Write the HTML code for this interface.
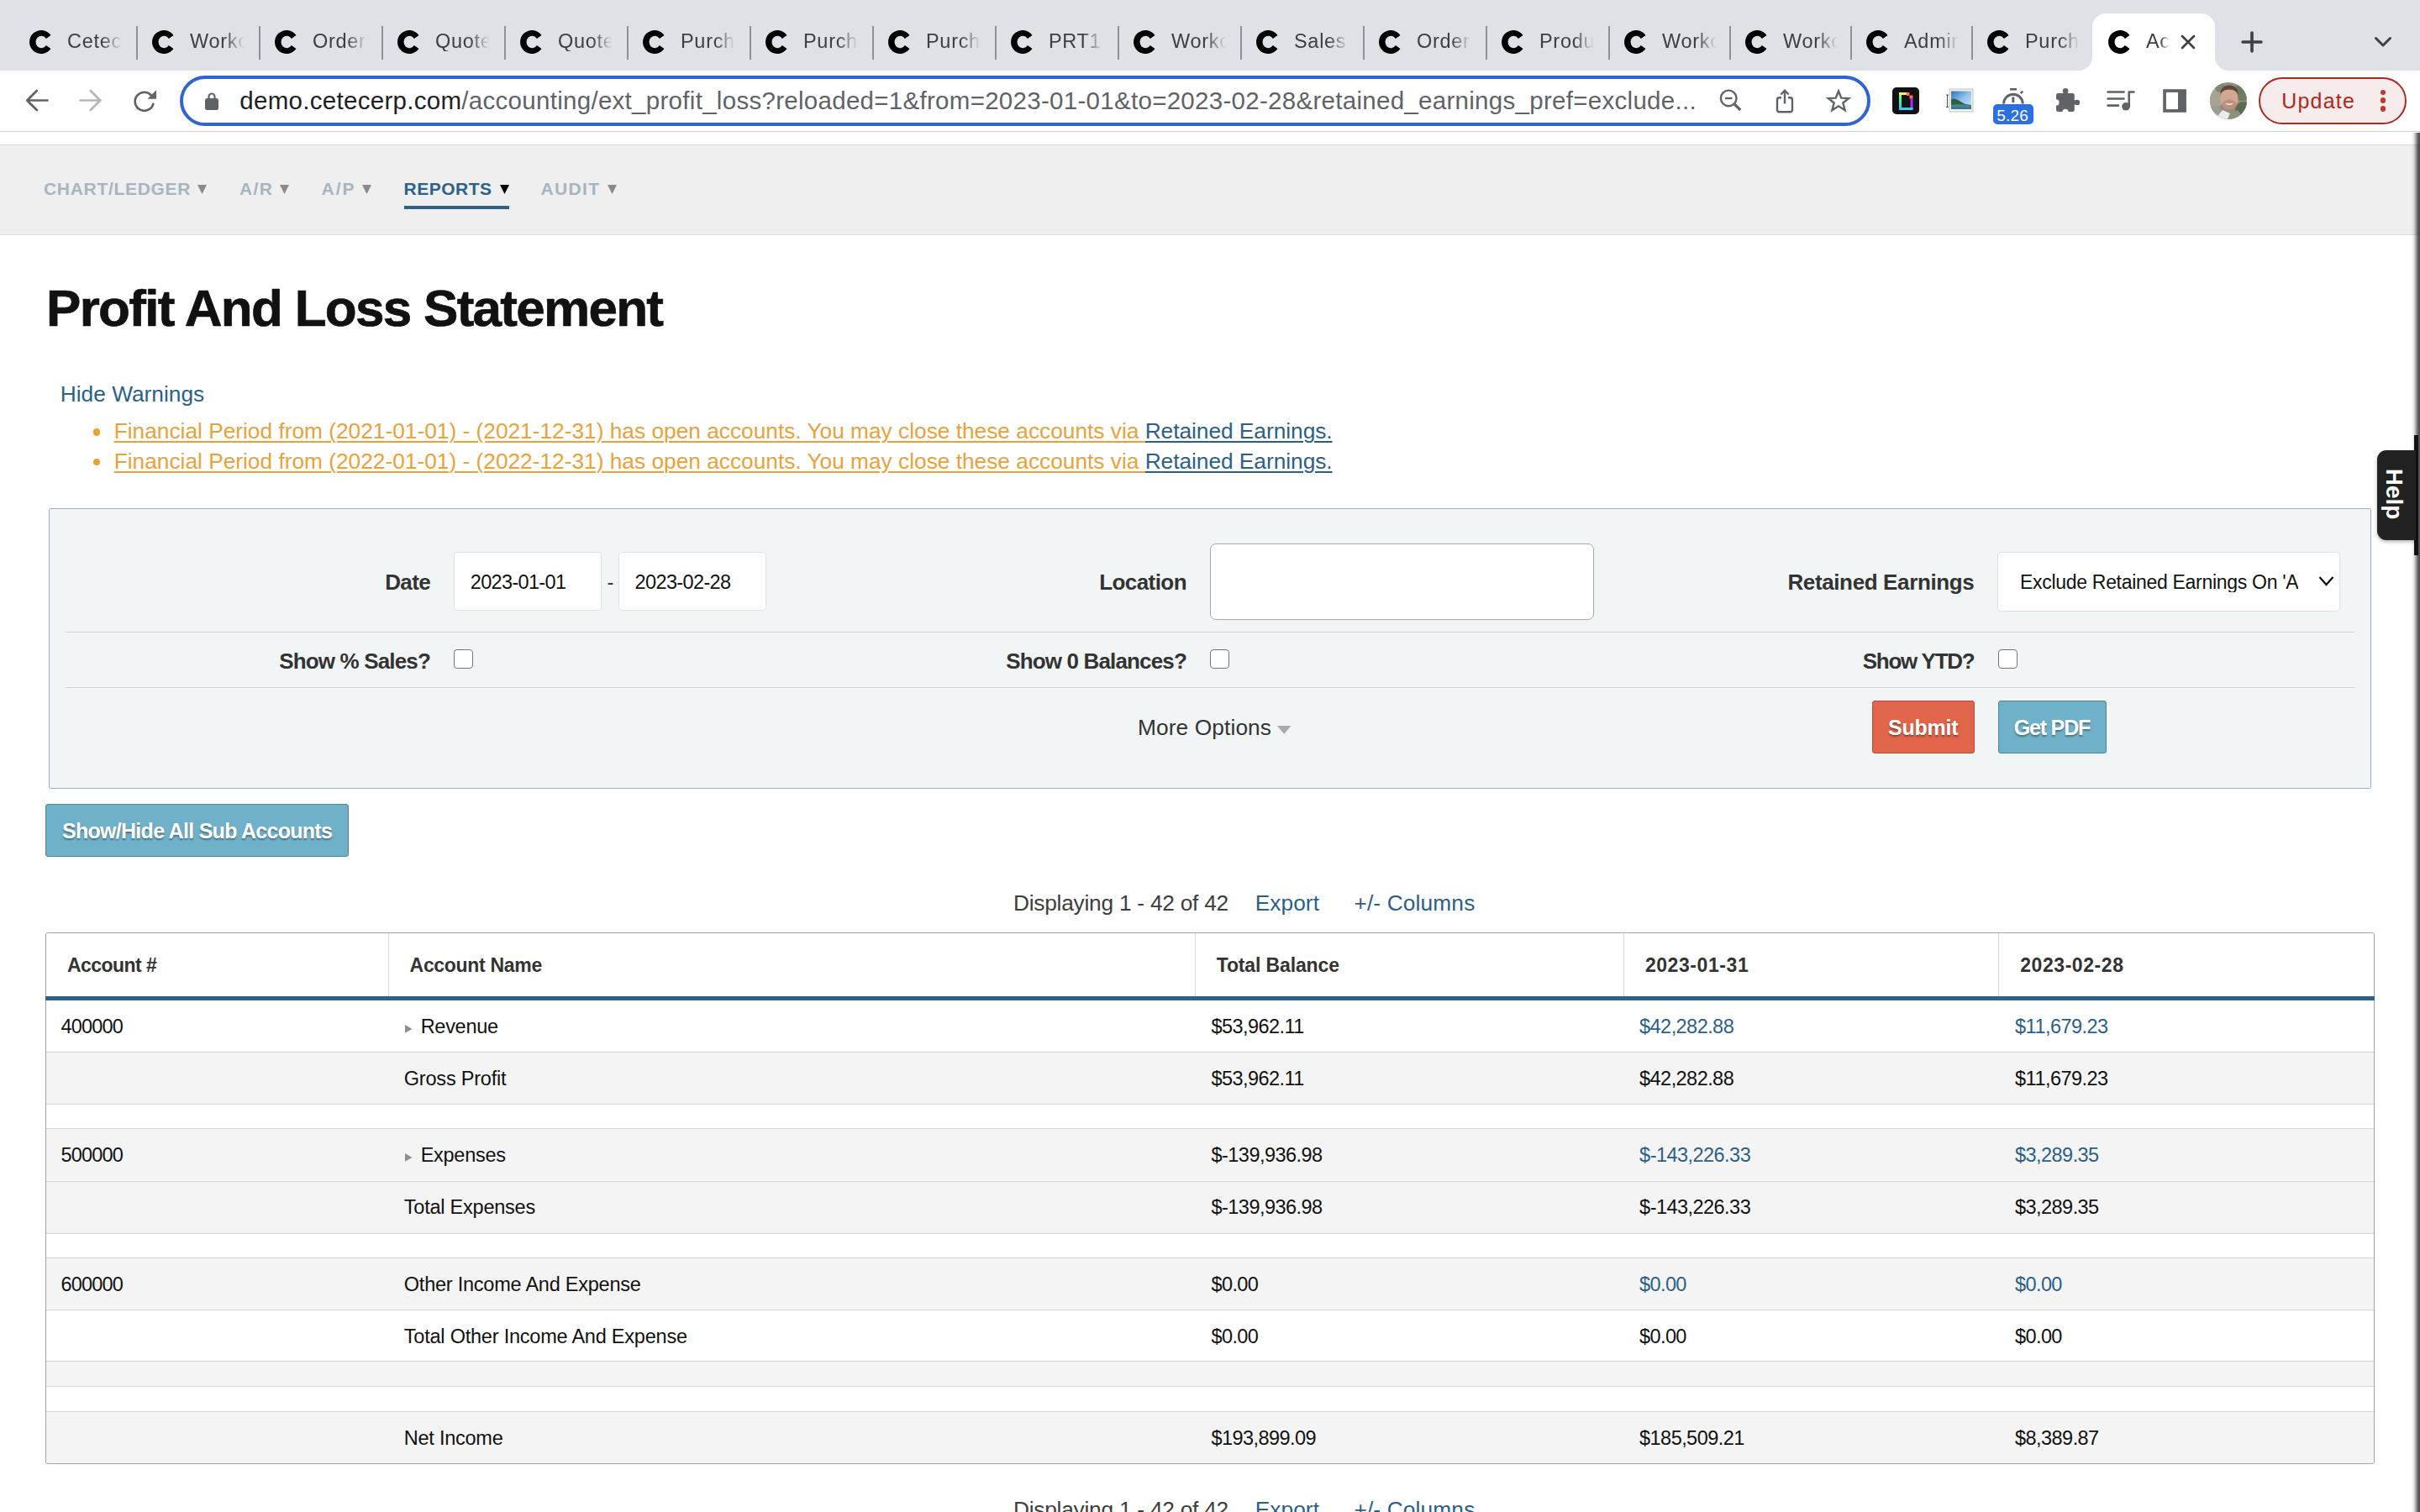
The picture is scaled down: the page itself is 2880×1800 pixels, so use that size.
<!DOCTYPE html>
<html><head><meta charset="utf-8"><title>Profit And Loss Statement</title>
<style>
html,body{margin:0;padding:0;width:2880px;height:1800px;overflow:hidden;background:#fff;font-family:"Liberation Sans", sans-serif;}
.b{position:absolute;}
.t{position:absolute;white-space:nowrap;font-family:"Liberation Sans", sans-serif;}
.tabt{color:#3c4043;overflow:hidden;-webkit-mask-image:linear-gradient(90deg,#000 62%,transparent 98%);mask-image:linear-gradient(90deg,#000 62%,transparent 98%);}
</style></head><body>
<div class="b" style="left:0px;top:0px;width:2880px;height:84px;background:#dee1e6"></div>
<div class="b" style="left:162px;top:31px;width:2px;height:40px;background:#8e9196"></div>
<div class="b" style="left:308px;top:31px;width:2px;height:40px;background:#8e9196"></div>
<div class="b" style="left:454px;top:31px;width:2px;height:40px;background:#8e9196"></div>
<div class="b" style="left:600px;top:31px;width:2px;height:40px;background:#8e9196"></div>
<div class="b" style="left:746px;top:31px;width:2px;height:40px;background:#8e9196"></div>
<div class="b" style="left:892px;top:31px;width:2px;height:40px;background:#8e9196"></div>
<div class="b" style="left:1038px;top:31px;width:2px;height:40px;background:#8e9196"></div>
<div class="b" style="left:1184px;top:31px;width:2px;height:40px;background:#8e9196"></div>
<div class="b" style="left:1330px;top:31px;width:2px;height:40px;background:#8e9196"></div>
<div class="b" style="left:1476px;top:31px;width:2px;height:40px;background:#8e9196"></div>
<div class="b" style="left:1622px;top:31px;width:2px;height:40px;background:#8e9196"></div>
<div class="b" style="left:1768px;top:31px;width:2px;height:40px;background:#8e9196"></div>
<div class="b" style="left:1914px;top:31px;width:2px;height:40px;background:#8e9196"></div>
<div class="b" style="left:2058px;top:31px;width:2px;height:40px;background:#8e9196"></div>
<div class="b" style="left:2202px;top:31px;width:2px;height:40px;background:#8e9196"></div>
<div class="b" style="left:2346px;top:31px;width:2px;height:40px;background:#8e9196"></div>
<svg class="b" style="left:35px;top:36px" width="26" height="28" viewBox="0 0 26 28"><path d="M25.47 5.97 A14 14 0 1 0 25.47 22.03 L19.9 18.1 A6.8 7.2 0 1 1 19.9 9.9 Z" fill="#000"></path></svg>
<div class="t tabt" style="left:80px;top:37.61px;font-size:23.5px;line-height:23.5px;letter-spacing:0.7px;width:66px;">Cetec</div>
<svg class="b" style="left:181px;top:36px" width="26" height="28" viewBox="0 0 26 28"><path d="M25.47 5.97 A14 14 0 1 0 25.47 22.03 L19.9 18.1 A6.8 7.2 0 1 1 19.9 9.9 Z" fill="#000"></path></svg>
<div class="t tabt" style="left:226px;top:37.61px;font-size:23.5px;line-height:23.5px;letter-spacing:0.7px;width:66px;">Worko</div>
<svg class="b" style="left:327px;top:36px" width="26" height="28" viewBox="0 0 26 28"><path d="M25.47 5.97 A14 14 0 1 0 25.47 22.03 L19.9 18.1 A6.8 7.2 0 1 1 19.9 9.9 Z" fill="#000"></path></svg>
<div class="t tabt" style="left:372px;top:37.61px;font-size:23.5px;line-height:23.5px;letter-spacing:0.7px;width:66px;">Order</div>
<svg class="b" style="left:473px;top:36px" width="26" height="28" viewBox="0 0 26 28"><path d="M25.47 5.97 A14 14 0 1 0 25.47 22.03 L19.9 18.1 A6.8 7.2 0 1 1 19.9 9.9 Z" fill="#000"></path></svg>
<div class="t tabt" style="left:518px;top:37.61px;font-size:23.5px;line-height:23.5px;letter-spacing:0.7px;width:66px;">Quote</div>
<svg class="b" style="left:619px;top:36px" width="26" height="28" viewBox="0 0 26 28"><path d="M25.47 5.97 A14 14 0 1 0 25.47 22.03 L19.9 18.1 A6.8 7.2 0 1 1 19.9 9.9 Z" fill="#000"></path></svg>
<div class="t tabt" style="left:664px;top:37.61px;font-size:23.5px;line-height:23.5px;letter-spacing:0.7px;width:66px;">Quote</div>
<svg class="b" style="left:765px;top:36px" width="26" height="28" viewBox="0 0 26 28"><path d="M25.47 5.97 A14 14 0 1 0 25.47 22.03 L19.9 18.1 A6.8 7.2 0 1 1 19.9 9.9 Z" fill="#000"></path></svg>
<div class="t tabt" style="left:810px;top:37.61px;font-size:23.5px;line-height:23.5px;letter-spacing:0.7px;width:66px;">Purch</div>
<svg class="b" style="left:911px;top:36px" width="26" height="28" viewBox="0 0 26 28"><path d="M25.47 5.97 A14 14 0 1 0 25.47 22.03 L19.9 18.1 A6.8 7.2 0 1 1 19.9 9.9 Z" fill="#000"></path></svg>
<div class="t tabt" style="left:956px;top:37.61px;font-size:23.5px;line-height:23.5px;letter-spacing:0.7px;width:66px;">Purch</div>
<svg class="b" style="left:1057px;top:36px" width="26" height="28" viewBox="0 0 26 28"><path d="M25.47 5.97 A14 14 0 1 0 25.47 22.03 L19.9 18.1 A6.8 7.2 0 1 1 19.9 9.9 Z" fill="#000"></path></svg>
<div class="t tabt" style="left:1102px;top:37.61px;font-size:23.5px;line-height:23.5px;letter-spacing:0.7px;width:66px;">Purch</div>
<svg class="b" style="left:1203px;top:36px" width="26" height="28" viewBox="0 0 26 28"><path d="M25.47 5.97 A14 14 0 1 0 25.47 22.03 L19.9 18.1 A6.8 7.2 0 1 1 19.9 9.9 Z" fill="#000"></path></svg>
<div class="t tabt" style="left:1248px;top:37.61px;font-size:23.5px;line-height:23.5px;letter-spacing:0.7px;width:66px;">PRT1</div>
<svg class="b" style="left:1349px;top:36px" width="26" height="28" viewBox="0 0 26 28"><path d="M25.47 5.97 A14 14 0 1 0 25.47 22.03 L19.9 18.1 A6.8 7.2 0 1 1 19.9 9.9 Z" fill="#000"></path></svg>
<div class="t tabt" style="left:1394px;top:37.61px;font-size:23.5px;line-height:23.5px;letter-spacing:0.7px;width:66px;">Worko</div>
<svg class="b" style="left:1495px;top:36px" width="26" height="28" viewBox="0 0 26 28"><path d="M25.47 5.97 A14 14 0 1 0 25.47 22.03 L19.9 18.1 A6.8 7.2 0 1 1 19.9 9.9 Z" fill="#000"></path></svg>
<div class="t tabt" style="left:1540px;top:37.61px;font-size:23.5px;line-height:23.5px;letter-spacing:0.7px;width:66px;">Sales</div>
<svg class="b" style="left:1641px;top:36px" width="26" height="28" viewBox="0 0 26 28"><path d="M25.47 5.97 A14 14 0 1 0 25.47 22.03 L19.9 18.1 A6.8 7.2 0 1 1 19.9 9.9 Z" fill="#000"></path></svg>
<div class="t tabt" style="left:1686px;top:37.61px;font-size:23.5px;line-height:23.5px;letter-spacing:0.7px;width:66px;">Order</div>
<svg class="b" style="left:1787px;top:36px" width="26" height="28" viewBox="0 0 26 28"><path d="M25.47 5.97 A14 14 0 1 0 25.47 22.03 L19.9 18.1 A6.8 7.2 0 1 1 19.9 9.9 Z" fill="#000"></path></svg>
<div class="t tabt" style="left:1832px;top:37.61px;font-size:23.5px;line-height:23.5px;letter-spacing:0.7px;width:66px;">Produ</div>
<svg class="b" style="left:1933px;top:36px" width="26" height="28" viewBox="0 0 26 28"><path d="M25.47 5.97 A14 14 0 1 0 25.47 22.03 L19.9 18.1 A6.8 7.2 0 1 1 19.9 9.9 Z" fill="#000"></path></svg>
<div class="t tabt" style="left:1978px;top:37.61px;font-size:23.5px;line-height:23.5px;letter-spacing:0.7px;width:66px;">Worko</div>
<svg class="b" style="left:2077px;top:36px" width="26" height="28" viewBox="0 0 26 28"><path d="M25.47 5.97 A14 14 0 1 0 25.47 22.03 L19.9 18.1 A6.8 7.2 0 1 1 19.9 9.9 Z" fill="#000"></path></svg>
<div class="t tabt" style="left:2122px;top:37.61px;font-size:23.5px;line-height:23.5px;letter-spacing:0.7px;width:66px;">Worko</div>
<svg class="b" style="left:2221px;top:36px" width="26" height="28" viewBox="0 0 26 28"><path d="M25.47 5.97 A14 14 0 1 0 25.47 22.03 L19.9 18.1 A6.8 7.2 0 1 1 19.9 9.9 Z" fill="#000"></path></svg>
<div class="t tabt" style="left:2266px;top:37.61px;font-size:23.5px;line-height:23.5px;letter-spacing:0.7px;width:66px;">Admin</div>
<svg class="b" style="left:2365px;top:36px" width="26" height="28" viewBox="0 0 26 28"><path d="M25.47 5.97 A14 14 0 1 0 25.47 22.03 L19.9 18.1 A6.8 7.2 0 1 1 19.9 9.9 Z" fill="#000"></path></svg>
<div class="t tabt" style="left:2410px;top:37.61px;font-size:23.5px;line-height:23.5px;letter-spacing:0.7px;width:66px;">Purch</div>
<svg class="b" style="left:2474px;top:16px" width="178" height="68" viewBox="0 0 178 68"><path d="M0 68 A16 16 0 0 0 16 52 L16 16 A16 16 0 0 1 32 0 L146 0 A16 16 0 0 1 162 16 L162 52 A16 16 0 0 0 178 68 Z" fill="#fff"></path></svg>
<svg class="b" style="left:2509px;top:36px" width="26" height="28" viewBox="0 0 26 28"><path d="M25.47 5.97 A14 14 0 1 0 25.47 22.03 L19.9 18.1 A6.8 7.2 0 1 1 19.9 9.9 Z" fill="#000"></path></svg>
<div class="t tabt" style="left:2554px;top:37.61px;font-size:23.5px;line-height:23.5px;letter-spacing:0.7px;width:28px;">Accounting</div>
<svg class="b" style="left:2594px;top:40px" width="20" height="20" viewBox="0 0 20 20"><path d="M3 3 L17 17 M17 3 L3 17" stroke="#3c4043" stroke-width="2.6" stroke-linecap="round"></path></svg>
<svg class="b" style="left:2666px;top:36px" width="28" height="28" viewBox="0 0 28 28"><path d="M14 3 V25 M3 14 H25" stroke="#3c4043" stroke-width="3.6" stroke-linecap="round"></path></svg>
<svg class="b" style="left:2824px;top:42px" width="24" height="16" viewBox="0 0 24 16"><path d="M3.5 3.5 L12 12 L20.5 3.5" fill="none" stroke="#3c4043" stroke-width="3" stroke-linecap="round" stroke-linejoin="round"></path></svg>
<div class="b" style="left:0px;top:84px;width:2880px;height:72px;background:#fff"></div>
<div class="b" style="left:0px;top:156px;width:2880px;height:1px;background:#cfd0d2"></div>
<div class="b" style="left:0px;top:157px;width:2880px;height:15px;background:#fff"></div>
<svg class="b" style="left:28px;top:104px" width="32" height="32" viewBox="0 0 32 32"><path d="M28.5 15.5 H4.5 M15.8 4 L4.3 15.5 L15.8 27" fill="none" stroke="#5f6368" stroke-width="2.7" stroke-linecap="round" stroke-linejoin="round"></path></svg>
<svg class="b" style="left:92px;top:104px" width="32" height="32" viewBox="0 0 32 32"><path d="M3.5 15.5 H27.5 M15.8 4 L27.3 15.5 L15.8 27" fill="none" stroke="#b6b6b6" stroke-width="2.7" stroke-linecap="round" stroke-linejoin="round"></path></svg>
<svg class="b" style="left:156px;top:104px" width="32" height="32" viewBox="0 0 32 32"><path d="M23.8 9.3 A11 11 0 1 0 26.3 19.8" fill="none" stroke="#5f6368" stroke-width="2.7" stroke-linecap="round"></path><path d="M30 3.3 L30 13.7 L19.5 13.7 Z" fill="#5f6368"></path></svg>
<div class="b" style="left:214px;top:90px;width:2012px;height:60px;border:4px solid #3164d0;border-radius:30px;box-sizing:border-box;background:#fff"></div>
<svg class="b" style="left:240px;top:106px" width="24" height="28" viewBox="0 0 24 28"><path d="M8.5 12 V9 A3.5 3.5 0 0 1 15.5 9 V12" fill="none" stroke="#5f6368" stroke-width="2.2"></path><rect x="4" y="11" width="16" height="14" rx="2.5" fill="#5f6368"></rect></svg>
<div class="t" style="left: 285.3px; top: 105.03px; font-size: 29.5px; line-height: 29.5px; white-space: pre; letter-spacing: 0.291px;"><span style="color:#202124">demo.cetecerp.com</span><span style="color:#5f6368">/accounting/ext_profit_loss?reloaded=1&amp;from=2023-01-01&amp;to=2023-02-28&amp;retained_earnings_pref=exclude...</span></div>
<svg class="b" style="left:2044px;top:104px" width="32" height="32" viewBox="0 0 32 32"><circle cx="13.2" cy="12.9" r="9.3" fill="none" stroke="#5f6368" stroke-width="2.4"></circle><path d="M9 13 H17.4" stroke="#5f6368" stroke-width="2.4"></path><path d="M20.2 20 L27.2 27" stroke="#5f6368" stroke-width="3.2"></path></svg>
<svg class="b" style="left:2110px;top:104px" width="28" height="32" viewBox="0 0 28 32"><path d="M14 4 V19.5" stroke="#5f6368" stroke-width="2.4"></path><path d="M9.3 8.5 L14 3.8 L18.7 8.5" fill="none" stroke="#5f6368" stroke-width="2.4"></path><path d="M10 12.2 H7.8 A2.8 2.8 0 0 0 5 15 V26.5 A2.8 2.8 0 0 0 7.8 29.3 H20.2 A2.8 2.8 0 0 0 23 26.5 V15 A2.8 2.8 0 0 0 20.2 12.2 H18" fill="none" stroke="#5f6368" stroke-width="2.4"></path></svg>
<svg class="b" style="left:2172px;top:104px" width="32" height="32" viewBox="0 0 32 32"><path d="M16 4.5 L19.3 12.6 L28.2 13 L21.3 18.5 L23.7 27.2 L16 22.3 L8.3 27.2 L10.7 18.5 L3.8 13 L12.7 12.6 Z" fill="none" stroke="#5f6368" stroke-width="2.4" stroke-linejoin="miter"></path></svg>
<svg class="b" style="left:2252px;top:104px" width="32" height="32" viewBox="0 0 32 32"><defs><linearGradient id="gl" x1="0" y1="0" x2="0" y2="1"><stop offset="0" stop-color="#c8ff5a"></stop><stop offset="0.45" stop-color="#33ff99"></stop><stop offset="1" stop-color="#33ccff"></stop></linearGradient></defs><rect x="0" y="0" width="32" height="32" rx="5" fill="#121212"></rect><rect x="8" y="6" width="3" height="20" fill="url(#gl)"></rect><rect x="8" y="6" width="9" height="3" fill="#fff35c"></rect><rect x="17" y="6" width="3.5" height="4" fill="#ff6a6a"></rect><rect x="20.5" y="9.5" width="4" height="4" fill="#ff6a6a"></rect><rect x="21.5" y="13.5" width="3" height="12.5" fill="#9933ff"></rect><rect x="8" y="24" width="16.5" height="3" fill="#33ccff"></rect></svg>
<svg class="b" style="left:2314px;top:104px" width="36" height="32" viewBox="0 0 36 32"><defs><linearGradient id="sky" x1="0" y1="0" x2="1" y2="1"><stop offset="0" stop-color="#2f6fc2"></stop><stop offset="0.5" stop-color="#8fc3ea"></stop><stop offset="1" stop-color="#cfe6f5"></stop></linearGradient><linearGradient id="sea" x1="0" y1="0" x2="0" y2="1"><stop offset="0" stop-color="#4d8a9c"></stop><stop offset="1" stop-color="#3a6d8e"></stop></linearGradient></defs><path d="M2 9 H5 M2 23.5 H5 M3.5 9 V23.5" stroke="#555" stroke-width="1.1" fill="none"></path><rect x="6" y="2" width="28" height="27" fill="#eef2f5" stroke="#b9b4a8" stroke-width="0.8"></rect><rect x="8" y="4.5" width="24" height="21.5" fill="url(#sky)"></rect><path d="M8 14 Q12 12.5 16 15 T25 20 L32 21 V26 H8 Z" fill="#2e5e3c"></path><path d="M8 21 Q18 19.5 32 21.5 V26 H8 Z" fill="url(#sea)"></path></svg>
<svg class="b" style="left:2380px;top:100px" width="32" height="28" viewBox="0 0 32 28"><path d="M12 6.3 H20" stroke="#5f6368" stroke-width="2.6"></path><path d="M4.6 23.5 A11.3 11.3 0 0 1 27.2 23.5" fill="none" stroke="#5f6368" stroke-width="3"></path><path d="M15.8 15.5 V22" stroke="#5f6368" stroke-width="3"></path><path d="M24.8 11.2 L27.3 8.7" stroke="#5f6368" stroke-width="2.4"></path></svg>
<div class="b" style="left:2372px;top:124px;width:48px;height:24px;background:#2b70de;border-radius:5px"></div>
<div class="t" style="left: 2376.3px; top: 128.12px; font-size: 19px; line-height: 19px; color: rgb(255, 255, 255); letter-spacing: 0.172px;">5.26</div>
<svg class="b" style="left:2444px;top:104px" width="32" height="32" viewBox="0 0 32 32"><rect x="3" y="7.1" width="21.8" height="21.9" rx="2.2" fill="#5f6368"></rect><circle cx="14.1" cy="4.2" r="3.3" fill="#5f6368"></circle><rect x="11.8" y="4" width="4.6" height="4" fill="#5f6368"></rect><circle cx="28" cy="17.9" r="3.2" fill="#5f6368"></circle><rect x="24" y="15.6" width="4" height="4.6" fill="#5f6368"></rect><circle cx="3" cy="17.9" r="3.6" fill="#fff"></circle><circle cx="14" cy="29.3" r="3.6" fill="#fff"></circle></svg>
<svg class="b" style="left:2506px;top:104px" width="36" height="32" viewBox="0 0 36 32"><path d="M2.5 5.5 H21.5 M2.5 13.5 H21.5 M2.5 21.6 H15" stroke="#5f6368" stroke-width="2.6" stroke-linecap="round"></path><path d="M27.7 23 V5.5 H33.5" fill="none" stroke="#5f6368" stroke-width="2.6" stroke-linecap="round" stroke-linejoin="round"></path><circle cx="24" cy="22.8" r="4.8" fill="#5f6368"></circle></svg>
<svg class="b" style="left:2572px;top:104px" width="32" height="32" viewBox="0 0 32 32"><rect x="2.2" y="2.2" width="27.7" height="27.6" fill="#5f6368"></rect><rect x="5.9" y="5.9" width="14.1" height="20.2" fill="#fff"></rect></svg>
<svg class="b" style="left:2630px;top:98px" width="44" height="44" viewBox="0 0 44 44"><defs><clipPath id="avc"><circle cx="22" cy="22" r="22"></circle></clipPath></defs><g clip-path="url(#avc)"><rect width="44" height="44" fill="#8e9182"></rect><circle cx="7" cy="18" r="11" fill="#a6a393"></circle><circle cx="38" cy="12" r="10" fill="#6e7b62"></circle><circle cx="40" cy="33" r="10" fill="#5d6c50"></circle><circle cx="5" cy="37" r="9" fill="#a09d8e"></circle><circle cx="12" cy="6" r="6" fill="#7f8573"></circle><path d="M6 44 L15 33 L24 37 L21 44 Z" fill="#e8ebee"></path><path d="M21 44 L25 36 L33 33 L42 44 Z" fill="#8c9276"></path><ellipse cx="23" cy="19.5" rx="10.5" ry="13.5" fill="#d3a791"></ellipse><path d="M12.5 15 Q12 4 23 3.5 Q34 4 33.5 15 Q32 9 23 8.5 Q14 9 12.5 15 Z" fill="#5f4838"></path><ellipse cx="23" cy="27" rx="9" ry="6.5" fill="#a7806c" opacity="0.55"></ellipse><path d="M17.5 24.5 Q23 29.5 28.5 24.5 Q23 26.5 17.5 24.5 Z" fill="#f5f1ec"></path></g></svg>
<div class="b" style="left:2688px;top:92px;width:176px;height:56px;border:2px solid #b3261e;border-radius:28px;box-sizing:border-box;background:#f6ecec"></div>
<div class="t" style="left: 2715.2px; top: 108.14px; font-size: 25px; line-height: 25px; color: rgb(179, 38, 30); letter-spacing: 1.215px;">Update</div>
<div class="b" style="left:2832.8px;top:106.6px;width:6.4px;height:6.4px;border-radius:50%;background:#c0392b"></div>
<div class="b" style="left:2832.8px;top:116.39999999999999px;width:6.4px;height:6.4px;border-radius:50%;background:#c0392b"></div>
<div class="b" style="left:2832.8px;top:126.39999999999999px;width:6.4px;height:6.4px;border-radius:50%;background:#c0392b"></div>
<div class="b" style="left:0px;top:172px;width:2880px;height:108px;background:#efefef;border-top:1px solid #d9d9d9;border-bottom:1px solid #dcdcdc;box-sizing:border-box"></div>
<div class="t" style="left: 52px; top: 214.22px; font-size: 21px; line-height: 21px; color: rgb(165, 182, 193); font-weight: 700; letter-spacing: 0.687px;">CHART/LEDGER</div>
<svg class="b" style="left:235px;top:220px" width="11" height="11" viewBox="0 0 11 11"><path d="M0 0 H11 L5.5 11 Z" fill="#8a8a8a"></path></svg>
<div class="t" style="left: 285px; top: 214.22px; font-size: 21px; line-height: 21px; color: rgb(165, 182, 193); font-weight: 700; letter-spacing: 1.414px;">A/R</div>
<svg class="b" style="left:332.5px;top:220px" width="11" height="11" viewBox="0 0 11 11"><path d="M0 0 H11 L5.5 11 Z" fill="#8a8a8a"></path></svg>
<div class="t" style="left: 382.5px; top: 214.22px; font-size: 21px; line-height: 21px; color: rgb(165, 182, 193); font-weight: 700; letter-spacing: 1.992px;">A/P</div>
<svg class="b" style="left:430.5px;top:220px" width="11" height="11" viewBox="0 0 11 11"><path d="M0 0 H11 L5.5 11 Z" fill="#8a8a8a"></path></svg>
<div class="t" style="left: 480.5px; top: 214.22px; font-size: 21px; line-height: 21px; color: rgb(45, 97, 137); font-weight: 700; letter-spacing: 0.497px;">REPORTS</div>
<svg class="b" style="left:595px;top:220px" width="11" height="11" viewBox="0 0 11 11"><path d="M0 0 H11 L5.5 11 Z" fill="#000"></path></svg>
<div class="t" style="left: 643.5px; top: 214.22px; font-size: 21px; line-height: 21px; color: rgb(165, 182, 193); font-weight: 700; letter-spacing: 1.332px;">AUDIT</div>
<svg class="b" style="left:723px;top:220px" width="11" height="11" viewBox="0 0 11 11"><path d="M0 0 H11 L5.5 11 Z" fill="#8a8a8a"></path></svg>
<div class="b" style="left:481px;top:245px;width:125px;height:4px;background:#2d6189"></div>
<div class="t" style="left: 55px; top: 336.12px; font-size: 62px; line-height: 62px; color: rgb(17, 17, 17); font-weight: 700; -webkit-text-stroke: 0.7px rgb(17, 17, 17); letter-spacing: -1.717px;">Profit And Loss Statement</div>
<div class="t" style="left: 71.8px; top: 456.24px; font-size: 26.3px; line-height: 26.3px; color: rgb(43, 95, 136); letter-spacing: -0.007px;">Hide Warnings</div>
<div class="b" style="left:111.1px;top:510.3px;width:8.4px;height:8.4px;border-radius:50%;background:#e9a23b"></div>
<div class="t" style="left:135.7px;top:500.24px;font-size:26.3px;line-height:26.3px;color:#e9a23b;white-space:pre;"><span style="text-decoration: underline 2px; text-underline-offset: 3px; letter-spacing: -0.009px;">Financial Period from (2021-01-01) - (2021-12-31) has open accounts. You may close these accounts via </span><span style="color: rgb(43, 95, 136); text-decoration: underline 2px; text-underline-offset: 3px; letter-spacing: -0.04px;">Retained Earnings.</span></div>
<div class="b" style="left:111.1px;top:545.8px;width:8.4px;height:8.4px;border-radius:50%;background:#e9a23b"></div>
<div class="t" style="left:135.7px;top:535.74px;font-size:26.3px;line-height:26.3px;color:#e9a23b;white-space:pre;"><span style="text-decoration: underline 2px; text-underline-offset: 3px; letter-spacing: -0.009px;">Financial Period from (2022-01-01) - (2022-12-31) has open accounts. You may close these accounts via </span><span style="color: rgb(43, 95, 136); text-decoration: underline 2px; text-underline-offset: 3px; letter-spacing: -0.04px;">Retained Earnings.</span></div>
<div class="b" style="left:58px;top:605px;width:2764px;height:334px;background:#f2f5f6;border:1px solid #8cb5be;border-radius:2.5px;box-sizing:border-box"></div>
<div class="b" style="left:77px;top:752px;width:2726px;height:1px;background:#d3d8db"></div>
<div class="b" style="left:77px;top:818px;width:2726px;height:1px;background:#d3d8db"></div>
<div class="t" style="right: 2368px; top: 680.49px; font-size: 26px; line-height: 26px; color: rgb(51, 51, 51); font-weight: 700; letter-spacing: -0.653px;">Date</div>
<div class="t" style="right: 1468px; top: 679.99px; font-size: 26px; line-height: 26px; color: rgb(51, 51, 51); font-weight: 700; letter-spacing: -0.563px;">Location</div>
<div class="t" style="right: 530.6px; top: 679.99px; font-size: 26px; line-height: 26px; color: rgb(51, 51, 51); font-weight: 700; letter-spacing: -0.368px;">Retained Earnings</div>
<div class="t" style="right: 2368px; top: 773.99px; font-size: 26px; line-height: 26px; color: rgb(51, 51, 51); font-weight: 700; letter-spacing: -0.845px;">Show % Sales?</div>
<div class="t" style="right: 1468px; top: 774.19px; font-size: 26px; line-height: 26px; color: rgb(51, 51, 51); font-weight: 700; letter-spacing: -0.841px;">Show 0 Balances?</div>
<div class="t" style="right: 530.6px; top: 773.99px; font-size: 26px; line-height: 26px; color: rgb(51, 51, 51); font-weight: 700; letter-spacing: -1.259px;">Show YTD?</div>
<div class="b" style="left:540px;top:657px;width:176px;height:70px;background:#fff;border:1px solid #dfe2e4;border-radius:4px;box-sizing:border-box"></div>
<div class="b" style="left:736px;top:657px;width:176px;height:70px;background:#fff;border:1px solid #dfe2e4;border-radius:4px;box-sizing:border-box"></div>
<div class="t" style="left: 559.8px; top: 682.11px; font-size: 23.5px; line-height: 23.5px; color: rgb(17, 17, 17); letter-spacing: -0.669px;">2023-01-01</div>
<div class="t" style="left: 755.6px; top: 682.11px; font-size: 23.5px; line-height: 23.5px; color: rgb(17, 17, 17); letter-spacing: -0.635px;">2023-02-28</div>
<div class="t " style="left:722.50px;top:682.11px;font-size:23.5px;line-height:23.5px;color:#333;font-weight:400;">-</div>
<div class="b" style="left:1440px;top:647px;width:457px;height:91px;background:#fff;border:1.5px solid #a9a9a9;border-radius:7px;box-sizing:border-box"></div>
<div class="b" style="left:2377px;top:657px;width:408px;height:71px;background:#fff;border:1px solid #dfe2e4;border-radius:4px;box-sizing:border-box"></div>
<div class="t" style="left:2404px;top:681.53px;font-size:23px;line-height:23px;color:#111;width:331px;overflow:hidden;white-space:pre;letter-spacing:-0.3px">Exclude Retained Earnings On 'As Of' Date</div>
<svg class="b" style="left:2758px;top:684px" width="21" height="16" viewBox="0 0 21 16"><path d="M2.5 3 L10.5 12 L18.5 3" fill="none" stroke="#111" stroke-width="2.2" stroke-linejoin="miter"></path></svg>
<div class="b" style="left:540.4px;top:773px;width:23.0px;height:23px;background:#fff;border:1.6px solid #767676;border-radius:4px;box-sizing:border-box"></div>
<div class="b" style="left:1440.2px;top:773px;width:23.0px;height:23px;background:#fff;border:1.6px solid #767676;border-radius:4px;box-sizing:border-box"></div>
<div class="b" style="left:2377.5px;top:773px;width:23.0px;height:23px;background:#fff;border:1.6px solid #767676;border-radius:4px;box-sizing:border-box"></div>
<div class="t" style="left: 1354px; top: 852.94px; font-size: 26.3px; line-height: 26.3px; color: rgb(51, 51, 51); letter-spacing: 0.104px;">More Options</div>
<svg class="b" style="left:1519.6px;top:864px" width="16.4" height="10" viewBox="0 0 16.4 10"><path d="M0 0 H16.4 L8.2 10 Z" fill="#aaaaaa"></path></svg>
<div class="b" style="left:2228px;top:834px;width:122px;height:63px;background:#e0654b;border:1px solid #b5503b;border-radius:3px;box-sizing:border-box"></div>
<div class="t" style="left: 2247px; top: 853.84px; font-size: 25px; line-height: 25px; color: rgb(255, 255, 255); font-weight: 700; text-shadow: rgba(0, 0, 0, 0.35) 0px 2px 2px; letter-spacing: -0.224px;">Submit</div>
<div class="b" style="left:2377.5px;top:834px;width:129.0px;height:63px;background:#6fb1c9;border:1px solid #4e8597;border-radius:3px;box-sizing:border-box"></div>
<div class="t" style="left: 2396.7px; top: 853.84px; font-size: 25px; line-height: 25px; color: rgb(255, 255, 255); font-weight: 700; text-shadow: rgba(0, 0, 0, 0.35) 0px 2px 2px; letter-spacing: -1.171px;">Get PDF</div>
<div class="b" style="left:54px;top:957px;width:361px;height:63px;background:#6fb1c9;border:1px solid #4e8597;border-radius:3px;box-sizing:border-box"></div>
<div class="t" style="left: 74px; top: 976.94px; font-size: 25px; line-height: 25px; color: rgb(255, 255, 255); font-weight: 700; text-shadow: rgba(0, 0, 0, 0.35) 0px 2px 2px; letter-spacing: -0.718px;">Show/Hide All Sub Accounts</div>
<div class="t" style="left: 1206px; top: 1061.74px; font-size: 26.3px; line-height: 26.3px; color: rgb(61, 61, 61); letter-spacing: -0.249px;">Displaying 1 - 42 of 42</div>
<div class="t" style="left: 1493.7px; top: 1061.74px; font-size: 26.3px; line-height: 26.3px; color: rgb(43, 95, 136); letter-spacing: 0.057px;">Export</div>
<div class="t" style="left: 1611.4px; top: 1061.74px; font-size: 26.3px; line-height: 26.3px; color: rgb(43, 95, 136); letter-spacing: 0.14px;">+/- Columns</div>
<div class="t" style="left: 1206px; top: 1783.74px; font-size: 26.3px; line-height: 26.3px; color: rgb(61, 61, 61); letter-spacing: -0.249px;">Displaying 1 - 42 of 42</div>
<div class="t" style="left: 1493.7px; top: 1783.74px; font-size: 26.3px; line-height: 26.3px; color: rgb(43, 95, 136); letter-spacing: 0.057px;">Export</div>
<div class="t" style="left: 1611.4px; top: 1783.74px; font-size: 26.3px; line-height: 26.3px; color: rgb(43, 95, 136); letter-spacing: 0.14px;">+/- Columns</div>
<div class="b" style="left:54px;top:1110px;width:2772px;height:633px;background:#fff;border:1px solid #a3a3a3;border-radius:3px;box-sizing:border-box"></div>
<div class="b" style="left:461.6px;top:1111px;width:1.0px;height:76px;background:#d8d8d8"></div>
<div class="b" style="left:1421.7px;top:1111px;width:1.0px;height:76px;background:#d8d8d8"></div>
<div class="b" style="left:1931.9px;top:1111px;width:1.0px;height:76px;background:#d8d8d8"></div>
<div class="b" style="left:2378.2px;top:1111px;width:1.0px;height:76px;background:#d8d8d8"></div>
<div class="t" style="left: 80px; top: 1138.13px; font-size: 23px; line-height: 23px; color: rgb(51, 51, 51); font-weight: 700; letter-spacing: -0.536px;">Account #</div>
<div class="t" style="left: 487.6px; top: 1138.13px; font-size: 23px; line-height: 23px; color: rgb(51, 51, 51); font-weight: 700; letter-spacing: -0.313px;">Account Name</div>
<div class="t" style="left: 1447.7px; top: 1138.13px; font-size: 23px; line-height: 23px; color: rgb(51, 51, 51); font-weight: 700; letter-spacing: -0.129px;">Total Balance</div>
<div class="t" style="left: 1957.9px; top: 1138.13px; font-size: 23px; line-height: 23px; color: rgb(51, 51, 51); font-weight: 700; letter-spacing: 0.572px;">2023-01-31</div>
<div class="t" style="left: 2404.2px; top: 1138.13px; font-size: 23px; line-height: 23px; color: rgb(51, 51, 51); font-weight: 700; letter-spacing: 0.572px;">2023-02-28</div>
<div class="b" style="left:54px;top:1186px;width:2772px;height:4.5px;background:#2d6189"></div>
<div class="b" style="left:55px;top:1251.5px;width:2770px;height:1.5px;background:#d4d4d4;z-index:1"></div>
<div class="b" style="left:55px;top:1190.5px;width:2770px;height:61.5px;background:#fff;"></div>
<div class="t" style="left: 72.5px; top: 1210.96px; font-size: 23.5px; line-height: 23.5px; color: rgb(17, 17, 17); letter-spacing: -0.817px;">400000</div>
<svg class="b" style="left:482.4px;top:1220.1499999999999px" width="8.5" height="9.8" viewBox="0 0 8.5 9.8"><path d="M0 0 L8.5 4.9 L0 9.8 Z" fill="#8d8d8d"></path></svg>
<div class="t" style="left: 500.7px; top: 1210.96px; font-size: 23.5px; line-height: 23.5px; color: rgb(17, 17, 17); letter-spacing: -0.292px;">Revenue</div>
<div class="t" style="left: 1441.5px; top: 1210.96px; font-size: 23.5px; line-height: 23.5px; color: rgb(17, 17, 17); letter-spacing: -0.548px;">$53,962.11</div>
<div class="t" style="left: 1951.1px; top: 1210.96px; font-size: 23.5px; line-height: 23.5px; color: rgb(43, 95, 136); letter-spacing: -0.557px;">$42,282.88</div>
<div class="t" style="left: 2398.1px; top: 1210.96px; font-size: 23.5px; line-height: 23.5px; color: rgb(43, 95, 136); letter-spacing: -0.548px;">$11,679.23</div>
<div class="b" style="left:55px;top:1313.5px;width:2770px;height:1.5px;background:#d4d4d4;z-index:1"></div>
<div class="b" style="left:55px;top:1252px;width:2770px;height:62px;background:#f4f4f4;"></div>
<div class="t" style="left: 480.8px; top: 1272.71px; font-size: 23.5px; line-height: 23.5px; color: rgb(17, 17, 17); letter-spacing: -0.21px;">Gross Profit</div>
<div class="t" style="left: 1441.5px; top: 1272.71px; font-size: 23.5px; line-height: 23.5px; color: rgb(17, 17, 17); letter-spacing: -0.548px;">$53,962.11</div>
<div class="t" style="left: 1951.1px; top: 1272.71px; font-size: 23.5px; line-height: 23.5px; color: rgb(17, 17, 17); letter-spacing: -0.557px;">$42,282.88</div>
<div class="t" style="left: 2398.1px; top: 1272.71px; font-size: 23.5px; line-height: 23.5px; color: rgb(17, 17, 17); letter-spacing: -0.548px;">$11,679.23</div>
<div class="b" style="left:55px;top:1342.5px;width:2770px;height:1.5px;background:#d4d4d4;z-index:1"></div>
<div class="b" style="left:55px;top:1314px;width:2770px;height:29.299999999999955px;background:#fff;"></div>
<div class="b" style="left:55px;top:1405.5px;width:2770px;height:1.5px;background:#d4d4d4;z-index:1"></div>
<div class="b" style="left:55px;top:1343.3px;width:2770px;height:62.200000000000045px;background:#f4f4f4;"></div>
<div class="t" style="left: 72.5px; top: 1364.11px; font-size: 23.5px; line-height: 23.5px; color: rgb(17, 17, 17); letter-spacing: -0.817px;">500000</div>
<svg class="b" style="left:482.4px;top:1373.3px" width="8.5" height="9.8" viewBox="0 0 8.5 9.8"><path d="M0 0 L8.5 4.9 L0 9.8 Z" fill="#8d8d8d"></path></svg>
<div class="t" style="left: 500.7px; top: 1364.11px; font-size: 23.5px; line-height: 23.5px; color: rgb(17, 17, 17); letter-spacing: -0.274px;">Expenses</div>
<div class="t" style="left: 1441.5px; top: 1364.11px; font-size: 23.5px; line-height: 23.5px; color: rgb(17, 17, 17); letter-spacing: -0.536px;">$-139,936.98</div>
<div class="t" style="left: 1951.1px; top: 1364.11px; font-size: 23.5px; line-height: 23.5px; color: rgb(43, 95, 136); letter-spacing: -0.536px;">$-143,226.33</div>
<div class="t" style="left: 2398.1px; top: 1364.11px; font-size: 23.5px; line-height: 23.5px; color: rgb(43, 95, 136); letter-spacing: -0.557px;">$3,289.35</div>
<div class="b" style="left:55px;top:1467.5px;width:2770px;height:1.5px;background:#d4d4d4;z-index:1"></div>
<div class="b" style="left:55px;top:1405.5px;width:2770px;height:62.09999999999991px;background:#f4f4f4;"></div>
<div class="t" style="left: 480.8px; top: 1426.26px; font-size: 23.5px; line-height: 23.5px; color: rgb(17, 17, 17); letter-spacing: -0.228px;">Total Expenses</div>
<div class="t" style="left: 1441.5px; top: 1426.26px; font-size: 23.5px; line-height: 23.5px; color: rgb(17, 17, 17); letter-spacing: -0.536px;">$-139,936.98</div>
<div class="t" style="left: 1951.1px; top: 1426.26px; font-size: 23.5px; line-height: 23.5px; color: rgb(17, 17, 17); letter-spacing: -0.536px;">$-143,226.33</div>
<div class="t" style="left: 2398.1px; top: 1426.26px; font-size: 23.5px; line-height: 23.5px; color: rgb(17, 17, 17); letter-spacing: -0.557px;">$3,289.35</div>
<div class="b" style="left:55px;top:1496.5px;width:2770px;height:1.5px;background:#d4d4d4;z-index:1"></div>
<div class="b" style="left:55px;top:1467.6px;width:2770px;height:29.700000000000045px;background:#fff;"></div>
<div class="b" style="left:55px;top:1558.5px;width:2770px;height:1.5px;background:#d4d4d4;z-index:1"></div>
<div class="b" style="left:55px;top:1497.3px;width:2770px;height:62.100000000000136px;background:#f4f4f4;"></div>
<div class="t" style="left: 72.5px; top: 1518.06px; font-size: 23.5px; line-height: 23.5px; color: rgb(17, 17, 17); letter-spacing: -0.817px;">600000</div>
<div class="t" style="left: 480.8px; top: 1518.06px; font-size: 23.5px; line-height: 23.5px; color: rgb(17, 17, 17); letter-spacing: -0.232px;">Other Income And Expense</div>
<div class="t" style="left: 1441.5px; top: 1518.06px; font-size: 23.5px; line-height: 23.5px; color: rgb(17, 17, 17); letter-spacing: -0.626px;">$0.00</div>
<div class="t" style="left: 1951.1px; top: 1518.06px; font-size: 23.5px; line-height: 23.5px; color: rgb(43, 95, 136); letter-spacing: -0.626px;">$0.00</div>
<div class="t" style="left: 2398.1px; top: 1518.06px; font-size: 23.5px; line-height: 23.5px; color: rgb(43, 95, 136); letter-spacing: -0.626px;">$0.00</div>
<div class="b" style="left:55px;top:1619.5px;width:2770px;height:1.5px;background:#d4d4d4;z-index:1"></div>
<div class="b" style="left:55px;top:1559.4px;width:2770px;height:61.09999999999991px;background:#fff;"></div>
<div class="t" style="left: 480.8px; top: 1579.66px; font-size: 23.5px; line-height: 23.5px; color: rgb(17, 17, 17); letter-spacing: -0.22px;">Total Other Income And Expense</div>
<div class="t" style="left: 1441.5px; top: 1579.66px; font-size: 23.5px; line-height: 23.5px; color: rgb(17, 17, 17); letter-spacing: -0.626px;">$0.00</div>
<div class="t" style="left: 1951.1px; top: 1579.66px; font-size: 23.5px; line-height: 23.5px; color: rgb(17, 17, 17); letter-spacing: -0.626px;">$0.00</div>
<div class="t" style="left: 2398.1px; top: 1579.66px; font-size: 23.5px; line-height: 23.5px; color: rgb(17, 17, 17); letter-spacing: -0.626px;">$0.00</div>
<div class="b" style="left:55px;top:1649.5px;width:2770px;height:1.5px;background:#d4d4d4;z-index:1"></div>
<div class="b" style="left:55px;top:1620.5px;width:2770px;height:29.700000000000045px;background:#f4f4f4;"></div>
<div class="b" style="left:55px;top:1679.5px;width:2770px;height:1.5px;background:#d4d4d4;z-index:1"></div>
<div class="b" style="left:55px;top:1650.2px;width:2770px;height:30.09999999999991px;background:#fff;"></div>
<div class="b" style="left:55px;top:1680.3px;width:2770px;height:61.700000000000045px;background:#f4f4f4;border-radius:0 0 3px 3px;"></div>
<div class="t" style="left: 480.8px; top: 1700.86px; font-size: 23.5px; line-height: 23.5px; color: rgb(17, 17, 17); letter-spacing: -0.248px;">Net Income</div>
<div class="t" style="left: 1441.5px; top: 1700.86px; font-size: 23.5px; line-height: 23.5px; color: rgb(17, 17, 17); letter-spacing: -0.557px;">$193,899.09</div>
<div class="t" style="left: 1951.1px; top: 1700.86px; font-size: 23.5px; line-height: 23.5px; color: rgb(17, 17, 17); letter-spacing: -0.557px;">$185,509.21</div>
<div class="t" style="left: 2398.1px; top: 1700.86px; font-size: 23.5px; line-height: 23.5px; color: rgb(17, 17, 17); letter-spacing: -0.557px;">$8,389.87</div>
<div class="b" style="left:2870px;top:158px;width:10px;height:1642px;background:linear-gradient(90deg,rgba(0,0,0,0) 0%,rgba(0,0,0,0.12) 30%,rgba(0,0,0,0.45) 60%,rgba(0,0,0,0.66) 80%,rgba(0,0,0,0.68) 100%)"></div>
<div class="b" style="left:2873px;top:518px;width:5px;height:143px;background:#111"></div>
<div class="b" style="left:2828.5px;top:536px;width:46px;height:107px;background:#222;border-radius:11px 0 0 11px;box-shadow:0 2px 4px rgba(0,0,0,0.3)"></div>
<div class="t" style="left:2849px;top:588px;font-size:28px;line-height:28px;color:#fff;font-weight:700;transform:translate(-50%,-50%) rotate(90deg);transform-origin:50% 50%;">Help</div>
<script>(function(){var w=window.innerWidth;if(w&&Math.abs(w-2880)>2){document.body.style.zoom=w/2880;}})();</script>
</body></html>
